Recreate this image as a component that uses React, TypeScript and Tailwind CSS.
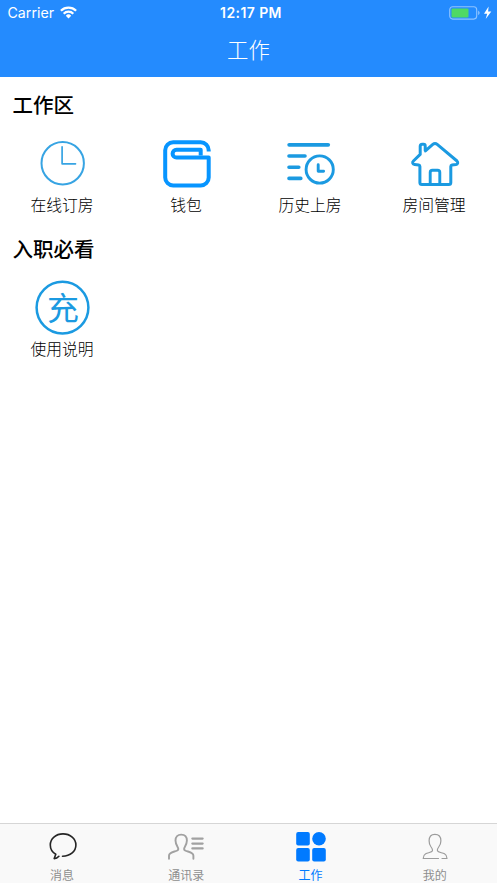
import type { ReactNode } from "react";

const cjk = "font-['Noto_Sans_CJK_SC',sans-serif]";

function Icon({ children }: { children: ReactNode }) {
  return (
    <svg viewBox="0 0 64 64" className="size-16" fill="none" stroke="#1b9ae1" strokeLinecap="round" strokeLinejoin="round">
      {children}
    </svg>
  );
}

const clock = (
  <Icon>
    <g stroke="#37a4e3" strokeWidth="2">
      <circle cx="32.7" cy="32.3" r="21.2" />
      <path d="M32.1 15.8v17h13.4" strokeWidth="1.7" />
    </g>
  </Icon>
);

const wallet = (
  <Icon>
    <path
      d="M54.7 20.4V19.2a8 8 0 0 0-8-8H19.2a8 8 0 0 0-8 8v27.200a8 8 0 0 0 8 8h27.500a8 8 0 0 0 8-8V26.600H22.500a3.900 3.900 0 0 1 0-7.800h24.200V24.200"
      stroke="#0795ff"
      strokeWidth="4"
      strokeLinecap="butt"
    />
  </Icon>
);

const history = (
  <Icon>
    <g transform="translate(1 -0.200)">
      <path d="M10.200 14h39" strokeWidth="3.800" />
      <path d="M10 25.200H26M10 36.400h9.800M10 47.600h11.800" strokeWidth="3.600" />
      <circle cx="40.700" cy="38.700" r="13.600" strokeWidth="2.900" />
      <path d="M39.200 34v6.400h5.400" strokeWidth="2.900" />
    </g>
  </Icon>
);

const house = (
  <Icon>
    <g transform="translate(0.600 0.200)">
      <path
        d="M22.600 19.200v-4.400q0-1.800-1.600-1.800h-1.400q-2 0-2 2v8.200l-6.800 6.600c-1.400 1.400-.7 3.200 1.200 3.400l4.200.5q1.100.2 1.100 1.500v16q0 2 2 2h26.900q2 0 2-2v-16q0-1.300 1.200-1.500l4-.5c1.800-.3 2.300-2.200 1-3.400L34.600 13.200q-2.200-1.900-4.400 0l-7.400 6.500"
        strokeWidth="3"
      />
      <path d="M27.600 52.600V41.300q0-2.200 2.200-2.200h5.200q2.200 0 2.200 2.200v11.300" strokeWidth="2.900" />
    </g>
  </Icon>
);

const charge = (
  <Icon>
    <circle cx="32.500" cy="32.600" r="25.900" strokeWidth="2.500" />
    <text x="32.900" y="44.800" textAnchor="middle" fontSize="32" fill="#1b9ae1" stroke="none" className={cjk}>
      充
    </text>
  </Icon>
);

function Section({ title, items }: { title: string; items: { icon: ReactNode; label: string }[] }) {
  return (
    <section className="h-36">
      <h2 className="flex h-[54px] items-center pl-[12.5px] text-[20.5px] font-medium text-black">{title}</h2>
      <div className="mr-px grid grid-cols-4">
        {items.map((item) => (
          <div key={item.label} className="flex flex-col items-center">
            {item.icon}
            <span className="text-[15.8px] leading-5 font-light text-black">{item.label}</span>
          </div>
        ))}
      </div>
    </section>
  );
}

function Tab({ label, active, children }: { label: string; active?: boolean; children: ReactNode }) {
  return (
    <div className={`flex flex-col items-center ${active ? "text-[#007aff]" : "text-[#8e8e8e]"}`}>
      <svg viewBox="0 0 48 44" className="h-11 w-12" fill="none" strokeLinecap="round" strokeLinejoin="round">
        {children}
      </svg>
      <span className="-mt-0.5 text-[12px] leading-[17px]">{label}</span>
    </div>
  );
}

export default function App() {
  return (
    <div className={`flex h-[883px] w-[497px] flex-col overflow-hidden bg-white ${cjk}`}>
      <header className="h-[77px] bg-[#248bfe] text-white">
        <div className="grid h-[26px] grid-cols-3 items-center font-['Inter',sans-serif]">
          <div className="flex items-center gap-[6px] pl-[7.5px]">
            <span className="text-[14.2px] leading-[26px]">Carrier</span>
            <svg viewBox="0 0 17 13" className="-mt-0.5 h-[13px] w-[17px]" fill="none" stroke="white" strokeWidth="2.3">
              <path d="M.9 4.7a10.8 10.8 0 0 1 15.2 0M3.7 7.7a6.8 6.8 0 0 1 9.6 0" />
              <path d="M8.5 12.4 5.8 9.7a3.8 3.8 0 0 1 5.4 0z" fill="white" stroke="none" />
            </svg>
          </div>
          <div className="pl-[5px] text-center text-[14px] leading-[26px] font-semibold tracking-[0.4px]">12:17 PM</div>
          <div className="flex justify-end pr-[5px]">
            <svg viewBox="0 0 43 14" className="h-3.5 w-[43px]">
              <rect x=".7" y=".7" width="27" height="12.4" rx="3" fill="none" stroke="#8fc4ff" strokeWidth="1.1" />
              <rect x="2.5" y="2.4" width="17" height="9" rx="1" fill="#4fd964" />
              <path d="M29.1 4.6q3.2 2.3 0 4.6z" fill="#8fc4ff" />
              <path d="M39.6.5 35 7.7h3.2L36.7 13l5.6-7.5h-3.2z" fill="white" />
            </svg>
          </div>
        </div>
        <h1 className="text-center text-[21.4px] leading-[46px] font-light">工作</h1>
      </header>

      <main className="flex-1">
        <Section
          title="工作区"
          items={[
            { icon: clock, label: "在线订房" },
            { icon: wallet, label: "钱包" },
            { icon: history, label: "历史上房" },
            { icon: house, label: "房间管理" },
          ]}
        />
        <Section title="入职必看" items={[{ icon: charge, label: "使用说明" }]} />
      </main>

      <nav className="grid h-[60px] grid-cols-4 border-t border-[#d6d6d6] bg-[#f9f9f9]">
        <Tab label="消息">
          <path
            d="M24.500 32.200C32.500 32.200 37.900 27.200 37.900 21c0-6.300-5.600-11.100-12.900-11.100S12.300 14.800 12.300 21c0 4 2.200 7.400 5.500 9.200l-1.600 4.400c2 0 3.400-.8 4.700-2.300"
            stroke="#252525"
            strokeWidth="1.600"
          />
        </Tab>
        <Tab label="通讯录">
          <path
            d="M7 34.700v-3c0-3.800 5.600-3.800 8.300-5.200 1.300-.7 1.200-2 .4-3.300-1.300-2-2.200-3.800-2.200-6.600 0-4 2.300-6 5.700-6s5.700 2 5.700 6c0 2.800-.9 4.600-2.200 6.600-.8 1.300-.9 2.600.4 3.300 2.700 1.400 8.300 1.400 8.300 5.200v3"
            stroke="#a1a1a1"
            strokeWidth="1.900"
          />
          <path d="M30.400 14.600h10.200M30.400 19.600h10.200M30.400 24.400h10.200" stroke="#a1a1a1" strokeWidth="2.300" />
        </Tab>
        <Tab label="工作" active>
          <g fill="#007aff">
            <rect x="9.200" y="8" width="13.600" height="13.400" rx="2" />
            <circle cx="32" cy="14.800" r="6.800" />
            <rect x="9.200" y="24" width="13.600" height="13.400" rx="2" />
            <rect x="25.200" y="24" width="13.600" height="13.400" rx="2" />
          </g>
        </Tab>
        <Tab label="我的">
          <path
            d="M27.500 34.500H12.200c.1-2.500.6-3.700 2.500-4.700 2.200-1.200 6.200-1.300 6.800-3 .4-1.500-.5-2.700-1.700-4.300-1.200-1.700-1.700-3.500-1.700-5.700 0-4.300 2.100-6.500 5.800-6.500s6 2.200 6 6.500c0 2.200-.6 4-1.900 5.700-1.200 1.600-2.100 2.800-1.600 4.300.6 1.700 4.600 1.800 7.100 3 1.900 1 2.400 2.200 2.500 4.700h-5"
            stroke="#9c9c9c"
            strokeWidth="1.200"
          />
        </Tab>
      </nav>
    </div>
  );
}
